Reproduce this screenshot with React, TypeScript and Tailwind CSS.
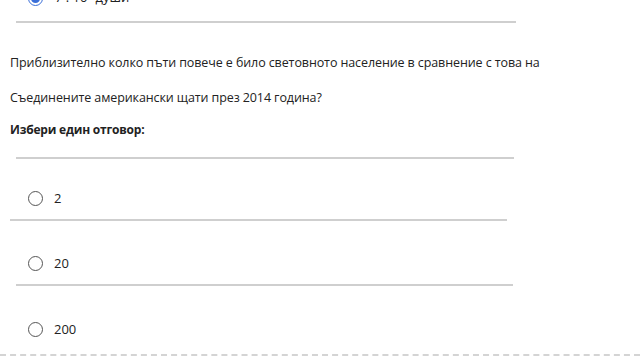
import React from 'react'

const OPTIONS = [
  { label: '2', pt: 'pt-[32px]', line: 'ml-[10px] w-[497px]' },
  { label: '20', pt: 'pt-[35px]', line: 'ml-[16px] w-[497px]' },
  { label: '200', pt: 'pt-[36px]', line: '' },
]

function Radio({ checked = false }: { checked?: boolean }) {
  return checked ? (
    <span className="flex h-[15px] w-[15px] items-center justify-center rounded-full border-[1.5px] border-[#3a6fd8] bg-white">
      <span className="h-[9px] w-[9px] rounded-full bg-[#3a6fd8]" />
    </span>
  ) : (
    <span className="h-[15px] w-[15px] rounded-full border-[1.5px] border-[#555]" />
  )
}

export default function App() {
  return (
    <div className="relative h-[360px] w-[640px] overflow-hidden bg-white text-[#222] font-['Open_Sans',sans-serif]">
      {/* previous answer, cut off at the top */}
      <div className="-mt-[9px] flex h-[14px] items-center gap-[12px] pl-[28px] text-[13px]">
        <Radio checked />
        <span>
          7 . 10<sup className="text-[8px]">9</sup> души
        </span>
      </div>
      <div className="mt-[16px] ml-[16px] h-[2px] w-[500px] bg-[#cfcfcf]" />

      <p className="mt-[22px] pl-[10px] text-[12.5px] leading-[35px] tracking-[-0.1px]">
        Приблизително колко пъти повече е било световното население в сравнение с това на
        <br />
        Съединените американски щати през 2014 година?
      </p>
      <p className="mt-[4px] pl-[10px] text-[12px] font-bold leading-[22px] tracking-[-0.2px]">Избери един отговор:</p>
      <div className="mt-[16px] ml-[16px] h-[2px] w-[498px] bg-[#cfcfcf]" />

      {OPTIONS.map((o) => (
        <div key={o.label}>
          <div className={`${o.pt} flex h-[15px] box-content items-center gap-[11px] pl-[28px] text-[13px]`}>
            <Radio />
            <span>{o.label}</span>
          </div>
          {o.line && <div className={`mt-[13px] h-[2px] bg-[#cfcfcf] ${o.line}`} />}
        </div>
      ))}

      <div className="absolute bottom-[4px] left-0 right-0 border-t-2 border-dashed border-[#d4d4d4]" />
    </div>
  )
}
